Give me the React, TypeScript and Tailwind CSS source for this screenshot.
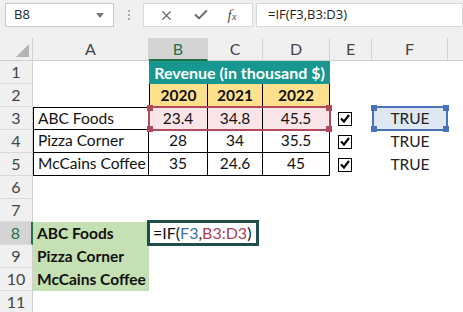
import { X, Check } from 'lucide-react';

const font = "font-['Lato','Open_Sans',sans-serif]";

const colHeads = [
    { label: 'A', w: 'w-[116px]' },
    { label: 'B', w: 'w-[59px]', active: true },
    { label: 'C', w: 'w-[55px]' },
    { label: 'D', w: 'w-[67px]' },
    { label: 'E', w: 'w-[42px]' },
    { label: 'F', w: 'w-[76px]' },
];

function RowHead({ n, active }: { n: number; active?: boolean }) {
    return (
        <div
            className={
                'w-[33px] shrink-0 flex items-center justify-center text-[16px] border-b border-[#dadada] ' +
                (active
                    ? 'bg-[#d4d4d4] text-[#217346] border-r-2 border-r-[#217346]'
                    : 'bg-[#f0f0f0] text-[#444] border-r border-r-[#d0d0d0]')
            }
        >
            {n}
        </div>
    );
}

function Tick() {
    return (
        <div className="w-[14px] h-[14px] border border-black bg-white flex items-center justify-center">
            <svg width="10" height="9" viewBox="0 0 10 9">
                <path d="M1 4.5 L4 7.5 L9 1" fill="none" stroke="#000" strokeWidth="2.2" />
            </svg>
        </div>
    );
}

function Handles({ color }: { color: string }) {
    const c = 'absolute w-[6px] h-[6px] ' + color;
    return (
        <>
            <div className={c + ' -left-[3px] -top-[3px]'} />
            <div className={c + ' -right-[3px] -top-[3px]'} />
            <div className={c + ' -left-[3px] -bottom-[3px]'} />
            <div className={c + ' -right-[3px] -bottom-[3px]'} />
        </>
    );
}

export default function App() {
    const cell = 'h-full shrink-0 flex items-center';
    const data = [
        { name: 'ABC Foods', v: ['23.4', '34.8', '45.5'] },
        { name: 'Pizza Corner', v: ['28', '34', '35.5'] },
        { name: 'McCains Coffee', v: ['35', '24.6', '45'] },
    ];

    return (
        <div className={'w-[463px] h-[312px] overflow-hidden bg-white ' + font}>
            {/* formula bar */}
            <div className="h-[38px] bg-[#f0f0f0] flex pt-[3px] pb-[11px] font-['Open_Sans',sans-serif] text-[13px] text-[#222]">
                <div className="ml-[5px] w-[109px] bg-white border border-[#c8c8c8] flex items-center justify-between pl-[8px] pr-[9px]">
                    <span>B8</span>
                    <svg width="8" height="5" viewBox="0 0 8 5">
                        <path d="M0 0 L8 0 L4 5 Z" fill="#777" />
                    </svg>
                </div>
                <div className="w-[29px] flex flex-col items-center justify-center gap-[2px]">
                    <div className="w-[2px] h-[2px] bg-[#aaa]" />
                    <div className="w-[2px] h-[2px] bg-[#aaa]" />
                    <div className="w-[2px] h-[2px] bg-[#aaa]" />
                </div>
                <div className="w-[110px] bg-white border border-[#d8d8d8] flex items-center justify-around px-[6px]">
                    <X size={15} strokeWidth={2} className="text-[#6b6b6b]" />
                    <Check size={16} strokeWidth={3} className="text-[#6b6b6b]" />
                    <span className="font-['Liberation_Serif',serif] italic text-[15px] text-[#555]">
                        f<span className="text-[11px]">x</span>
                    </span>
                </div>
                <div className="ml-[3px] flex-1 bg-white border border-[#d8d8d8] flex items-center pl-[11px]">
                    =IF(F3,B3:D3)
                </div>
            </div>

            {/* column headers */}
            <div className="flex h-[23px] bg-[#f0f0f0] text-[16px] text-[#444]">
                <div className="w-[33px] shrink-0 border-r border-b border-[#d0d0d0] relative">
                    <svg className="absolute right-[3px] bottom-[3px]" width="13" height="13" viewBox="0 0 13 13">
                        <path d="M13 0 L13 13 L0 13 Z" fill="#b4b4b4" />
                    </svg>
                </div>
                {colHeads.map(c => (
                    <div
                        key={c.label}
                        className={
                            c.w +
                            ' shrink-0 flex items-center justify-center border-r border-r-[#d4d4d4] ' +
                            (c.active
                                ? 'bg-[#d4d4d4] text-[#217346] border-b-2 border-b-[#217346]'
                                : 'border-b border-b-[#d0d0d0]')
                        }
                    >
                        {c.label}
                    </div>
                ))}
                <div className="flex-1 border-b border-[#d0d0d0]" />
            </div>

            {/* sheet body */}
            <div className="relative text-[15.5px] text-[#111]">
                {/* row 1 */}
                <div className="flex h-[23px]">
                    <RowHead n={1} />
                    <div className={cell + ' w-[116px]'} />
                    <div className={cell + ' w-[181px] justify-center bg-[#17978f] text-white font-bold text-[16px]'}>
                        Revenue (in thousand $)
                    </div>
                </div>
                {/* row 2 */}
                <div className="flex h-[23px]">
                    <RowHead n={2} />
                    <div className={cell + ' w-[116px]'} />
                    {['2020', '2021', '2022'].map((y, i) => (
                        <div
                            key={y}
                            className={
                                cell +
                                ' justify-center bg-[#ffe08f] font-bold border-r border-black ' +
                                (i === 0 ? 'w-[59px] border-l' : i === 1 ? 'w-[55px]' : 'w-[67px]')
                            }
                        >
                            {y}
                        </div>
                    ))}
                </div>
                {/* rows 3-5 */}
                {data.map((r, ri) => (
                    <div key={r.name} className="flex h-[23px]">
                        <RowHead n={ri + 3} />
                        <div
                            className={
                                cell +
                                ' w-[116px] pl-[4px] border-l border-r border-b border-black' +
                                (ri === 0 ? ' border-t' : '')
                            }
                        >
                            {r.name}
                        </div>
                        {r.v.map((v, vi) => (
                            <div
                                key={vi}
                                className={
                                    cell +
                                    ' justify-center border-r border-b border-black ' +
                                    (vi === 0 ? 'w-[59px]' : vi === 1 ? 'w-[55px]' : 'w-[67px]') +
                                    (ri === 0 ? ' bg-[#f9e5e8] border-t' : '')
                                }
                            >
                                {v}
                            </div>
                        ))}
                        <div className={cell + ' w-[42px] pl-[8px]'}>
                            <Tick />
                        </div>
                        <div className={cell + ' w-[76px] justify-center text-[#222]'}>TRUE</div>
                    </div>
                ))}
                {/* rows 6-11 */}
                {[6, 7, 8, 9, 10, 11].map(n => {
                    const label = n === 8 ? 'ABC Foods' : n === 9 ? 'Pizza Corner' : n === 10 ? 'McCains Coffee' : '';
                    return (
                        <div key={n} className="flex h-[23px]">
                            <RowHead n={n} active={n === 8} />
                            <div
                                className={
                                    cell + ' w-[116px] pl-[4px] font-bold ' + (label ? 'bg-[#c5e0b3]' : '')
                                }
                            >
                                {label}
                            </div>
                        </div>
                    );
                })}

                {/* B3:D3 range highlight */}
                <div className="absolute left-[148px] top-[45px] w-[183px] h-[25px] border-2 border-[#b34a5b]">
                    <Handles color="bg-[#b34a5b]" />
                </div>
                {/* F3 reference highlight */}
                <div className="absolute left-[372px] top-[45px] w-[76px] h-[25px] border-2 border-[#4a72b8] bg-[#dfe7f3] flex items-center justify-center text-[#222]">
                    TRUE
                    <Handles color="bg-[#4a72b8]" />
                </div>
                {/* B8 edit box */}
                <div className="absolute left-[147px] top-[159px] w-[112px] h-[26px] border-[3px] border-[#1f4e4c] bg-white flex items-center pl-[3px] text-[16px] text-[#111]">
                    =IF(<span className="text-[#3f6fb3]">F3</span>,<span className="text-[#a8415a]">B3:D3</span>)
                </div>
            </div>
        </div>
    );
}
